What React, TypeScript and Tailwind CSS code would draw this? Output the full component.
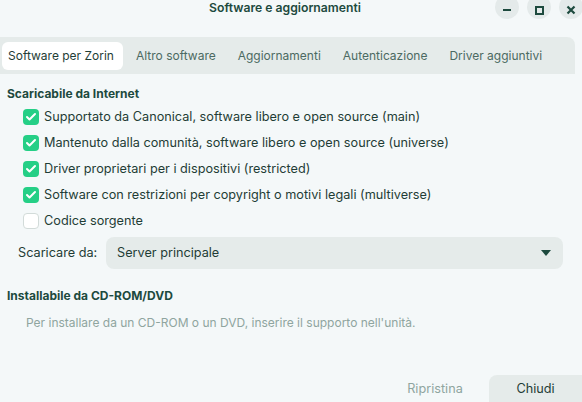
import { Check } from 'lucide-react'

const sources = [
  { label: 'Supportato da Canonical, software libero e open source (main)', checked: true },
  { label: 'Mantenuto dalla comunità, software libero e open source (universe)', checked: true },
  { label: 'Driver proprietari per i dispositivi (restricted)', checked: true },
  { label: 'Software con restrizioni per copyright o motivi legali (multiverse)', checked: true },
  { label: 'Codice sorgente', checked: false },
]

const tabs = ['Software per Zorin', 'Altro software', 'Aggiornamenti', 'Autenticazione', 'Driver aggiuntivi']

function WinButton({ children }: { children: React.ReactNode }) {
  return (
    <div className="w-6 h-6 rounded-full bg-[#e4eaea] flex items-center justify-center">{children}</div>
  )
}

export default function App() {
  return (
    <div
      className="w-[582px] h-[402px] bg-[#f4f8f9] text-[#1f3d36] text-[12.7px] overflow-hidden flex flex-col relative"
      style={{ fontFamily: 'Inter, "Noto Sans", sans-serif' }}
    >
      {/* header */}
      <div className="h-[37px] relative flex justify-center">
        <span className="font-semibold text-[12.2px] text-[#1d4a3e] mt-[-1px] mr-[12px]">Software e aggiornamenti</span>
        <div className="absolute right-[-1px] top-[-5px] flex gap-2">
          <WinButton>
            <div className="w-[8px] h-[2px] bg-[#1d4a3e] mt-[6px]" />
          </WinButton>
          <WinButton>
            <div className="w-[9px] h-[9px] border-2 border-[#1d4a3e] mt-[6px]" />
          </WinButton>
          <WinButton>
            <svg width="10" height="10" viewBox="0 0 10 10" className="mt-[6px]">
              <path d="M1.5 1.5 L8.5 8.5 M8.5 1.5 L1.5 8.5" stroke="#1d4a3e" strokeWidth="2.2" />
            </svg>
          </WinButton>
        </div>
      </div>

      {/* tabs */}
      <div className="h-[37px] bg-[#e5ebea] rounded-tr-[8px] mr-[7px] flex items-center pl-[2px] whitespace-nowrap text-[12px]">
        {tabs.map((t, i) => (
          <div
            key={t}
            className={
              i === 0
                ? 'h-[28px] px-[6px] bg-white rounded-[6px] flex items-center text-[#1f3d36] mr-[2px] w-[121px]'
                : 'h-[28px] px-[11px] flex items-center text-[#4c6a62]'
            }
          >
            {t}
          </div>
        ))}
      </div>

      {/* content */}
      <div className="px-[7px] pt-[11px]">
        <div className="font-bold text-[12px] text-[#1d4a3e]">Scaricabile da Internet</div>
        <div className="flex flex-col gap-[9px] mt-[5px] pl-[16px]">
          {sources.map((s) => (
            <div key={s.label} className="flex items-center gap-[5px] h-[17px]">
              {s.checked ? (
                <div className="w-[16px] h-[16px] rounded-[4px] bg-[#25cf86] flex items-center justify-center">
                  <Check size={12} strokeWidth={4} color="white" />
                </div>
              ) : (
                <div className="w-[16px] h-[16px] rounded-[4px] bg-white border border-[#d2dbd9]" />
              )}
              <span>{s.label}</span>
            </div>
          ))}
        </div>

        <div className="flex items-center mt-[8px] pl-[11px]">
          <span className="w-[88px]">Scaricare da:</span>
          <div className="flex-1 h-[32px] bg-[#e5ebea] rounded-[8px] mr-[12px] flex items-center justify-between pl-[11px] pr-[12px]">
            <span>Server principale</span>
            <svg width="10" height="6" viewBox="0 0 10 6">
              <path d="M0 0 H10 L5 6 Z" fill="#1d4a3e" />
            </svg>
          </div>
        </div>

        <div className="font-bold text-[12px] text-[#1d4a3e] mt-[18px]">Installabile da CD-ROM/DVD</div>
        <div className="text-[12px] text-[#8fa59f] mt-[9px] pl-[19px]">
          Per installare da un CD-ROM o un DVD, inserire il supporto nell'unità.
        </div>
      </div>

      {/* footer */}
      <div className="mt-auto flex justify-end items-end">
        <div className="h-[27px] w-[90px] flex items-center justify-center text-[#8fa59f] mr-[9px]">Ripristina</div>
        <div className="h-[27px] w-[93px] bg-[#e5ebea] rounded-tl-[8px] flex items-center justify-center">Chiudi</div>
      </div>
    </div>
  )
}
